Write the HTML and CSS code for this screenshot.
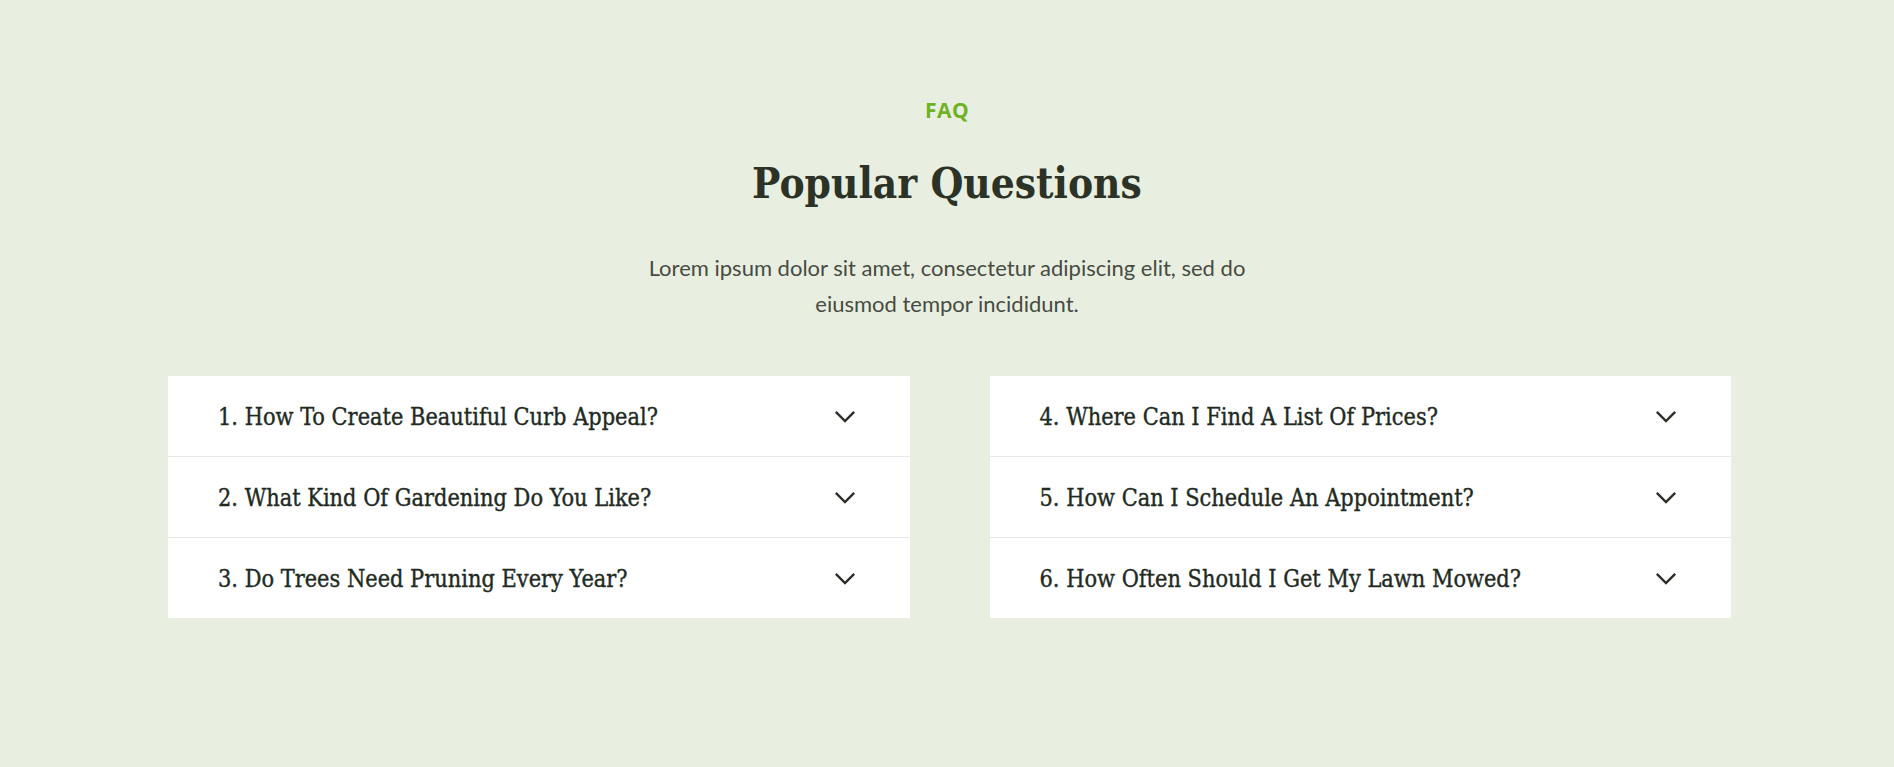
FILE: index.html
```html
<!DOCTYPE html>
<html lang="en">
<head>
    <meta charset="UTF-8">
    <meta name="viewport" content="width=device-width, initial-scale=1.0">
    <title>FAQ - Popular Questions</title>
    <link rel="stylesheet" href="styles.css">
</head>
<body>
    <section class="faq">
        <div class="faq-head">
            <span class="faq-tag">FAQ</span>
            <h2 class="faq-title">Popular Questions</h2>
            <p class="faq-intro">Lorem ipsum dolor sit amet, consectetur adipiscing elit, sed do eiusmod tempor incididunt.</p>
        </div>
        <div class="faq-grid">
            <ul class="faq-list">
                <li class="faq-item">
                    <span>1. How To Create Beautiful Curb Appeal?</span>
                    <svg class="chevron" viewBox="0 0 24 14"><path d="M2 2l10 10L22 2"/></svg>
                </li>
                <li class="faq-item">
                    <span>2. What Kind Of Gardening Do You Like?</span>
                    <svg class="chevron" viewBox="0 0 24 14"><path d="M2 2l10 10L22 2"/></svg>
                </li>
                <li class="faq-item">
                    <span>3. Do Trees Need Pruning Every Year?</span>
                    <svg class="chevron" viewBox="0 0 24 14"><path d="M2 2l10 10L22 2"/></svg>
                </li>
            </ul>
            <ul class="faq-list">
                <li class="faq-item">
                    <span>4. Where Can I Find A List Of Prices?</span>
                    <svg class="chevron" viewBox="0 0 24 14"><path d="M2 2l10 10L22 2"/></svg>
                </li>
                <li class="faq-item">
                    <span>5. How Can I Schedule An Appointment?</span>
                    <svg class="chevron" viewBox="0 0 24 14"><path d="M2 2l10 10L22 2"/></svg>
                </li>
                <li class="faq-item">
                    <span>6. How Often Should I Get My Lawn Mowed?</span>
                    <svg class="chevron" viewBox="0 0 24 14"><path d="M2 2l10 10L22 2"/></svg>
                </li>
            </ul>
        </div>
    </section>
</body>
</html>
```

FILE: styles.css
```css
body, html {
    margin: 0;
    height: 100%;
    background: #e9efe0;
    font-family: Lato, sans-serif;
}
.faq {
    padding-top: 96px;
}
.faq-head {
    text-align: center;
}
.faq-tag {
    display: block;
    font-family: "Open Sans", sans-serif;
    font-weight: 700;
    font-size: 21px;
    line-height: 28px;
    color: #6fb324;
    letter-spacing: 0.5px;
}
.faq-title {
    margin: 34px 0 0;
    font-family: "DejaVu Serif Condensed", "DejaVu Serif", serif;
    font-weight: 700;
    font-size: 42px;
    line-height: 52px;
    color: #2c3326;
}
.faq-intro {
    width: 660px;
    margin: 40px auto 0;
    font-size: 22px;
    line-height: 36px;
    color: #474b44;
}
.faq-grid {
    display: grid;
    grid-template-columns: 1fr 1fr;
    column-gap: 80px;
    width: 1563px;
    margin: 54px 0 0 168px;
}
.faq-list {
    list-style: none;
    margin: 0;
    padding: 0;
    background: #fff;
}
.faq-item {
    height: 80px;
    display: flex;
    align-items: center;
    justify-content: space-between;
    padding: 0 54px 0 50px;
    font-family: "DejaVu Serif Condensed", "DejaVu Serif", serif;
    font-size: 23.3px;
    color: #222a1f;
    -webkit-text-stroke: 0.35px #222a1f;
}
.faq-item + .faq-item {
    border-top: 1px solid #e6e8e3;
}
.chevron {
    width: 22px;
    height: 13px;
    fill: none;
    stroke: #2b2f27;
    stroke-width: 2.6;
}
```
